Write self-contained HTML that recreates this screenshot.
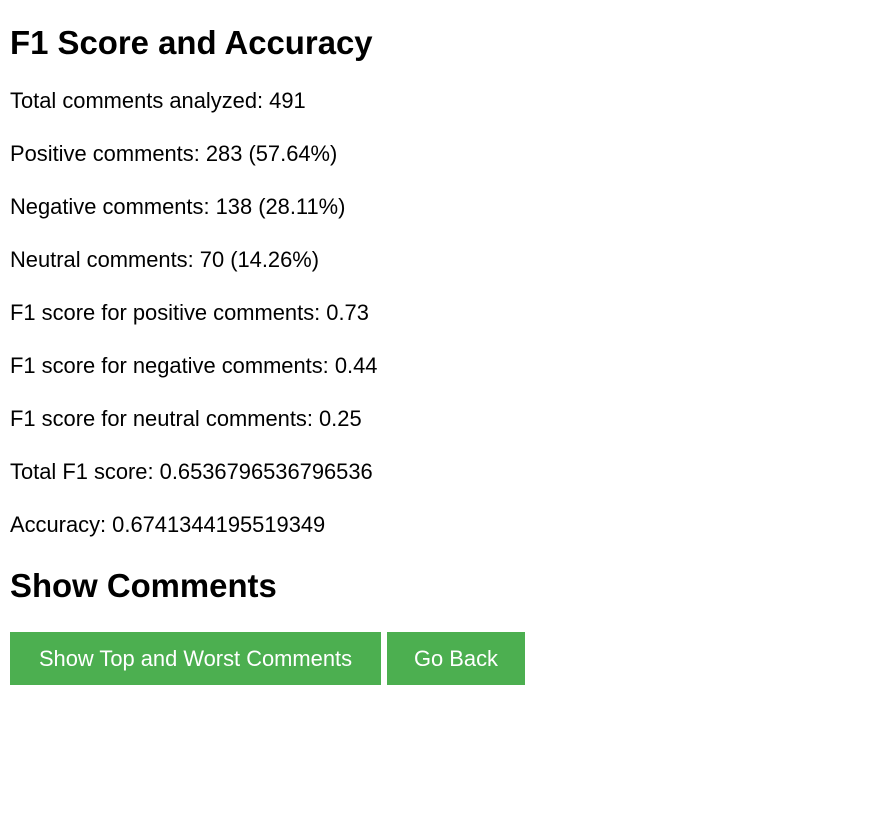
<!DOCTYPE html>
<html><head><meta charset="utf-8"><style>
body{margin:0;padding:0 0 0 10px;background:#fff;font-family:"Liberation Sans",Arial,sans-serif;color:#000;}
h1,h2{font-size:32.9px;line-height:48px;margin:19px 0 18px;font-weight:bold;}
h2{margin:1px 0 0;}
p{font-size:21.9px;line-height:32px;margin:0 0 21px;}
.btns{margin-top:22px;display:flex;gap:6px;}
.b{background:#4CAF50;color:#fff;font-size:21.9px;height:53px;line-height:53px;text-align:center;}
</style></head><body>
<h1>F1 Score and Accuracy</h1>
<p>Total comments analyzed: 491</p>
<p>Positive comments: 283 (57.64%)</p>
<p>Negative comments: 138 (28.11%)</p>
<p>Neutral comments: 70 (14.26%)</p>
<p>F1 score for positive comments: 0.73</p>
<p>F1 score for negative comments: 0.44</p>
<p>F1 score for neutral comments: 0.25</p>
<p>Total F1 score: 0.6536796536796536</p>
<p>Accuracy: 0.6741344195519349</p>
<h2>Show Comments</h2>
<div class="btns"><div class="b" style="width:371px">Show Top and Worst Comments</div><div class="b" style="width:138px">Go Back</div></div>
</body></html>
